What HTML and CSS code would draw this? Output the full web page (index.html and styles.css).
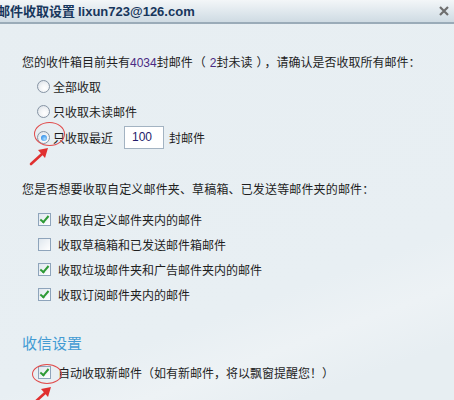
FILE: index.html
```html
<!DOCTYPE html>
<html lang="zh">
<head>
<meta charset="utf-8">
<link rel="stylesheet" href="styles.css">
</head>
<body>
<div class="dialog">
  <div class="titlebar">
    <span class="title">邮件收取设置 <span class="addr">lixun723@126.com</span></span>
    <svg class="close" width="10" height="10" viewBox="0 0 10 10"><path d="M1 1 L9 9 M9 1 L1 9" stroke="#6e6e6e" stroke-width="2.2" fill="none"/></svg>
  </div>
  <div class="content">
    <p class="line l1">您的收件箱目前共有<span class="num">4034</span>封邮件<span class="po">（</span><span class="num">2</span>封未读<span class="pc">）</span>，请确认是否收取所有邮件：</p>
    <div class="radios">
      <label class="row"><span class="radio"></span>全部收取</label>
      <label class="row"><span class="radio"></span>只收取未读邮件</label>
      <label class="row r3"><span class="radio on"></span>只收取最近<span class="input">100</span><span class="unit">封邮件</span>
        <span class="ring ring1"></span>
        <svg class="arrow arrow1" width="22" height="20" viewBox="0 0 22 20"><path d="M2 18 L13 8" stroke="#e03030" stroke-width="2.6" stroke-linecap="round"/><path d="M9 4 L19 2 L16 12 Z" fill="#e03030"/></svg>
      </label>
    </div>
    <p class="line l2">您是否想要收取自定义邮件夹、草稿箱、已发送等邮件夹的邮件：</p>
    <div class="checks">
      <div class="row"><span class="cb on"></span>收取自定义邮件夹内的邮件</div>
      <div class="row"><span class="cb"></span>收取草稿箱和已发送邮件箱邮件</div>
      <div class="row"><span class="cb on"></span>收取垃圾邮件夹和广告邮件夹内的邮件</div>
      <div class="row"><span class="cb on"></span>收取订阅邮件夹内的邮件</div>
    </div>
    <h2 class="heading">收信设置</h2>
    <div class="checks last">
      <div class="row"><span class="cb on"></span>自动收取新邮件（如有新邮件，将以飘窗提醒您！）
        <span class="ring ring2"></span>
        <svg class="arrow arrow2" width="22" height="20" viewBox="0 0 22 20"><path d="M2 18 L13 8" stroke="#e03030" stroke-width="2.6" stroke-linecap="round"/><path d="M9 4 L19 2 L16 12 Z" fill="#e03030"/></svg>
      </div>
    </div>
  </div>
</div>
</body>
</html>
```
FILE: styles.css
```css
html, body {
  margin: 0;
  padding: 0;
}
body {
  width: 454px;
  height: 400px;
  overflow: hidden;
  background: linear-gradient(160deg, #e7eef2 0%, #e8eff3 70%, #edf2f5 80%, #e7eef2 90%);
  font-family: "Noto Sans CJK SC", "Liberation Sans", sans-serif;
  font-size: 12px;
  color: #1e1e1e;
}
.dialog {
  position: relative;
  height: 400px;
}
.titlebar {
  height: 22px;
  border-bottom: 2px solid #9aabb8;
  background: linear-gradient(#f3f6f8, #dde6ec 60%, #cfdbe3);
  display: flex;
  align-items: center;
  justify-content: space-between;
  padding-right: 5px;
}
.title {
  margin-left: -3px;
  font-weight: bold;
  font-size: 13px;
  color: #17365c;
  line-height: 22px;
  white-space: nowrap;
}
.addr {
  font-family: "Liberation Sans", sans-serif;
}
.close {
  display: block;
}
.content {
  padding-left: 22px;
}
.line {
  margin: 0;
  height: 20px;
  line-height: 20px;
  white-space: nowrap;
}
.l1 {
  margin-top: 28px;
}
.num {
  color: #4a2a82;
  font-family: "Liberation Sans", sans-serif;
}
.po {
  margin-right: 4px;
  margin-left: 1px;
}
.pc {
  margin-left: 4px;
  margin-right: 2px;
}
.radios {
  margin-top: 2px;
  padding-left: 15px;
}
.row {
  position: relative;
  display: flex;
  align-items: center;
  height: 25px;
  white-space: nowrap;
}
.r3 {
  height: 27px;
}
.radio {
  width: 13px;
  height: 13px;
  border-radius: 50%;
  box-sizing: border-box;
  border: 1px solid #8694a4;
  background: radial-gradient(circle at 60% 65%, #ffffff 0%, #f3f5f7 40%, #d5dce3 100%);
  margin-right: 3px;
  position: relative;
  flex: none;
}
.radio.on::after {
  content: "";
  position: absolute;
  left: 2.5px;
  top: 2.5px;
  width: 6px;
  height: 6px;
  border-radius: 50%;
  background: radial-gradient(circle at 60% 65%, #a9dcff, #3a94ea 70%, #1c6fd0);
}
.input {
  margin-left: 11px;
  width: 40px;
  height: 23px;
  box-sizing: border-box;
  border: 1px solid #a3b3c2;
  background: #fff;
  color: #241c6a;
  font-family: "Liberation Sans", sans-serif;
  font-size: 12px;
  line-height: 21px;
  padding-left: 7px;
}
.unit {
  margin-left: 5px;
}
.l2 {
  margin-top: 28px;
  letter-spacing: 0.15px;
}
.checks {
  margin-top: 8px;
  padding-left: 16px;
}
.cb {
  width: 13px;
  height: 13px;
  box-sizing: border-box;
  border: 1px solid #8ea4bb;
  background: linear-gradient(135deg, #dfe7ee, #ffffff);
  margin-right: 7px;
  position: relative;
  flex: none;
}
.cb.on::after {
  content: "";
  position: absolute;
  left: 3px;
  top: 0px;
  width: 3px;
  height: 7px;
  border-right: 2px solid #2e9a35;
  border-bottom: 2px solid #2e9a35;
  transform: rotate(40deg);
}
.heading {
  margin: 26px 0 0 0;
  height: 20px;
  line-height: 20px;
  font-size: 15px;
  font-weight: normal;
  color: #439bd3;
}
.checks.last {
  margin-top: 7px;
}
.ring {
  position: absolute;
  border: 1px solid #e04a4a;
  border-radius: 50%;
}
.ring1 {
  left: -3px;
  top: -2px;
  width: 29px;
  height: 22px;
}
.ring2 {
  left: -6px;
  top: 4px;
  width: 28px;
  height: 18px;
}
.arrow {
  position: absolute;
}
.arrow1 {
  left: -8px;
  top: 22px;
}
.arrow2 {
  left: -6px;
  top: 25px;
}
```
